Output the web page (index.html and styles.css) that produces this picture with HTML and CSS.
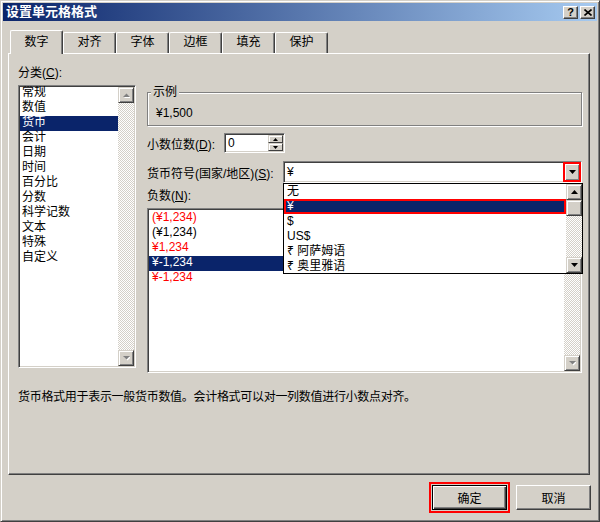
FILE: index.html
```html
<!DOCTYPE html>
<html lang="zh-CN">
<head>
    <meta charset="UTF-8">
    <title>设置单元格格式</title>
    <link rel="stylesheet" href="styles.css">
</head>
<body>
<div class="window">
    <div class="titlebar">
        <span class="title">设置单元格格式</span>
        <div class="caption-buttons">
            <div class="caption-btn help">?</div>
            <div class="caption-btn close">
                <svg width="8" height="7" viewBox="0 0 8 7"><path d="M0.5 0.5 L7.5 6.5 M7.5 0.5 L0.5 6.5" stroke="#000" stroke-width="1.6"/></svg>
            </div>
        </div>
    </div>

    <div class="tabs">
        <div class="tab active">数字</div>
        <div class="tab">对齐</div>
        <div class="tab">字体</div>
        <div class="tab">边框</div>
        <div class="tab">填充</div>
        <div class="tab">保护</div>
    </div>

    <div class="panel">
        <div class="panel-body">
            <div class="category">
                <div class="label">分类(<u>C</u>):</div>
                <div class="listbox category-list">
                    <ul class="items">
                        <li>常规</li>
                        <li>数值</li>
                        <li class="selected">货币</li>
                        <li>会计</li>
                        <li>日期</li>
                        <li>时间</li>
                        <li>百分比</li>
                        <li>分数</li>
                        <li>科学记数</li>
                        <li>文本</li>
                        <li>特殊</li>
                        <li>自定义</li>
                    </ul>
                    <div class="scrollbar">
                        <div class="sb-btn"><svg width="7" height="5" viewBox="0 0 7 5"><polygon points="1,5 8,5 4.5,1.5" fill="#fff"/><polygon points="0,4 7,4 3.5,0.5" fill="#808080"/></svg></div>
                        <div class="sb-track"></div>
                        <div class="sb-btn"><svg width="7" height="5" viewBox="0 0 7 5"><polygon points="1,1 8,1 4.5,4.5" fill="#fff"/><polygon points="0,0 7,0 3.5,3.5" fill="#808080"/></svg></div>
                    </div>
                </div>
            </div>

            <div class="options">
                <fieldset class="sample">
                    <legend>示例</legend>
                    <div class="sample-value">¥1,500</div>
                </fieldset>

                <div class="field-row decimals-row">
                    <span class="field-label decimals-label">小数位数(<u>D</u>):</span>
                    <div class="spin">
                        <span class="spin-value">0</span>
                        <div class="spin-buttons">
                            <div class="spin-btn"><svg width="5" height="3" viewBox="0 0 5 3"><polygon points="0,3 5,3 2.5,0" fill="#000"/></svg></div>
                            <div class="spin-btn"><svg width="5" height="3" viewBox="0 0 5 3"><polygon points="0,0 5,0 2.5,3" fill="#000"/></svg></div>
                        </div>
                    </div>
                </div>

                <div class="field-row symbol-row">
                    <span class="field-label symbol-label">货币符号(国家/地区)(<u>S</u>):</span>
                    <div class="combo">
                        <span class="combo-value">¥</span>
                        <div class="combo-btn marked"><svg width="7" height="4" viewBox="0 0 7 4"><polygon points="0,0 7,0 3.5,4" fill="#000"/></svg></div>
                        <div class="dropdown">
                            <ul class="items">
                                <li>无</li>
                                <li class="selected marked-row">¥</li>
                                <li>$</li>
                                <li>US$</li>
                                <li>₹ 阿萨姆语</li>
                                <li>₹ 奥里雅语</li>
                            </ul>
                            <div class="scrollbar">
                                <div class="sb-btn"><svg width="7" height="4" viewBox="0 0 7 4"><polygon points="0,4 7,4 3.5,0" fill="#000"/></svg></div>
                                <div class="sb-btn thumb"></div>
                                <div class="sb-track"></div>
                                <div class="sb-btn"><svg width="7" height="4" viewBox="0 0 7 4"><polygon points="0,0 7,0 3.5,4" fill="#000"/></svg></div>
                            </div>
                        </div>
                    </div>
                </div>

                <div class="label negative-label">负数(<u>N</u>):</div>
                <div class="listbox negative-list">
                    <ul class="items">
                        <li class="red">(¥1,234)</li>
                        <li>(¥1,234)</li>
                        <li class="red">¥1,234</li>
                        <li class="selected">¥-1,234</li>
                        <li class="red">¥-1,234</li>
                    </ul>
                    <div class="scrollbar">
                        <div class="sb-btn"><svg width="7" height="5" viewBox="0 0 7 5"><polygon points="1,5 8,5 4.5,1.5" fill="#fff"/><polygon points="0,4 7,4 3.5,0.5" fill="#808080"/></svg></div>
                        <div class="sb-track"></div>
                        <div class="sb-btn"><svg width="7" height="5" viewBox="0 0 7 5"><polygon points="1,1 8,1 4.5,4.5" fill="#fff"/><polygon points="0,0 7,0 3.5,3.5" fill="#808080"/></svg></div>
                    </div>
                </div>
            </div>
        </div>

        <p class="description">货币格式用于表示一般货币数值。会计格式可以对一列数值进行小数点对齐。</p>
    </div>

    <div class="actions">
        <button class="btn default marked">确定</button>
        <button class="btn">取消</button>
    </div>
</div>
</body>
</html>
```

FILE: styles.css
```css
* {
    box-sizing: border-box;
}

body {
    margin: 0;
    background: #d4d0c8;
    font-family: "Liberation Sans", "Noto Sans CJK SC", "Noto Sans", "DejaVu Sans", sans-serif;
    font-size: 12px;
    color: #000;
}

ul {
    list-style: none;
    margin: 0;
    padding: 0;
}

.window {
    width: 600px;
    height: 522px;
    padding: 2px;
    background: #d4d0c8;
    border: 1px solid;
    border-color: #d4d0c8 #404040 #404040 #d4d0c8;
    box-shadow: inset 1px 1px #fff, inset -1px -1px #808080;
}

/* title bar */

.titlebar {
    display: flex;
    align-items: center;
    justify-content: space-between;
    height: 18px;
    padding: 0 2px 0 3px;
    background: linear-gradient(to right, #0a246a, #a6caf0);
}

.title {
    color: #fff;
    font-weight: bold;
    font-size: 13px;
    line-height: 18px;
}

.caption-buttons {
    display: flex;
    gap: 2px;
}

.caption-btn {
    display: flex;
    align-items: center;
    justify-content: center;
    width: 15px;
    height: 13px;
    background: #d4d0c8;
    border: 1px solid;
    border-color: #fff #404040 #404040 #fff;
    box-shadow: inset -1px -1px #808080;
    font-weight: bold;
    font-size: 11px;
    line-height: 11px;
}

/* tabs */

.tabs {
    display: flex;
    align-items: flex-end;
    height: 23px;
    margin-top: 9px;
    padding-left: 7px;
}

.tab {
    width: 53px;
    height: 21px;
    text-align: center;
    line-height: 19px;
    border-top: 1px solid #fff;
    border-left: 1px solid #fff;
    border-right: 1px solid #404040;
    border-radius: 2px 2px 0 0;
    box-shadow: inset -1px 0 #808080;
}

.tab.active {
    position: relative;
    z-index: 1;
    height: 24px;
    margin-bottom: -1px;
    line-height: 22px;
    background: #d4d0c8;
}

/* panel */

.panel {
    height: 422px;
    margin: 0 7px 0 5px;
    padding: 12px 7px 0 9px;
    border: 1px solid;
    border-color: #fff #404040 #404040 #fff;
    box-shadow: inset -1px -1px #808080;
}

.panel-body {
    display: flex;
    gap: 11px;
}

.label {
    height: 15px;
    line-height: 15px;
    margin-bottom: 4px;
}

.category {
    width: 118px;
}

.options {
    width: 435px;
    padding-top: 19px;
}

/* list boxes */

.listbox {
    display: flex;
    background: #fff;
    border: 1px solid;
    border-color: #808080 #fff #fff #808080;
    box-shadow: inset 1px 1px #404040, inset -1px -1px #d4d0c8;
    padding: 1px;
}

.listbox .items {
    flex: 1;
    overflow: hidden;
}

.listbox li {
    height: 15px;
    line-height: 13px;
    padding-left: 2px;
    white-space: nowrap;
}

.category-list {
    height: 283px;
}

.category-list .items {
    margin-top: -1px;
}

.negative-list {
    height: 165px;
}

.negative-list li {
    padding-left: 3px;
}

.negative-list .items {
    margin-top: 1px;
}

li.selected {
    background: #0a246a;
    color: #fff;
}

li.red {
    color: #f00;
}

/* scroll bars */

.scrollbar {
    display: flex;
    flex-direction: column;
    width: 16px;
}

.sb-btn {
    display: flex;
    align-items: center;
    justify-content: center;
    height: 16px;
    flex-shrink: 0;
    background: #d4d0c8;
    border: 1px solid;
    border-color: #d4d0c8 #404040 #404040 #d4d0c8;
    box-shadow: inset 1px 1px #fff, inset -1px -1px #808080;
}

.sb-track {
    flex: 1;
    background: repeating-conic-gradient(#d4d0c8 0% 25%, #fff 0% 50%) 0 0 / 2px 2px;
}

/* sample group */

.sample {
    margin: 0;
    padding: 6px 8px 4px;
    min-inline-size: 0;
    border: 1px solid #808080;
    box-shadow: inset 1px 1px #fff, 1px 1px #fff;
}

.sample legend {
    margin-left: -5px;
    padding: 0 2px;
    line-height: 15px;
    background: #d4d0c8;
}

.sample-value {
    line-height: 15px;
}

/* fields */

.field-row {
    display: flex;
    align-items: center;
}

.decimals-row {
    margin-top: 7px;
}

.symbol-row {
    margin-top: 8px;
}

.decimals-label {
    width: 77px;
}

.symbol-label {
    width: 136px;
}

.spin,
.combo {
    display: flex;
    align-items: center;
    background: #fff;
    border: 1px solid;
    border-color: #808080 #fff #fff #808080;
    box-shadow: inset 1px 1px #404040, inset -1px -1px #d4d0c8;
    padding: 1px;
}

.spin {
    width: 61px;
    height: 20px;
}

.spin-value {
    flex: 1;
    padding-left: 2px;
}

.spin-buttons {
    display: flex;
    flex-direction: column;
    width: 15px;
}

.spin-btn {
    display: flex;
    align-items: center;
    justify-content: center;
    height: 8px;
    background: #d4d0c8;
    border: 1px solid;
    border-color: #d4d0c8 #404040 #404040 #d4d0c8;
    box-shadow: inset 1px 1px #fff;
}

.combo {
    position: relative;
    width: 299px;
    height: 22px;
}

.combo-value {
    flex: 1;
    padding-left: 2px;
}

.combo-btn {
    display: flex;
    align-items: center;
    justify-content: center;
    width: 16px;
    height: 18px;
    background: #d4d0c8;
    border: 1px solid;
    border-color: #d4d0c8 #404040 #404040 #d4d0c8;
    box-shadow: inset 1px 1px #fff, inset -1px -1px #808080;
}

.marked {
    outline: 2px solid #f00;
    outline-offset: -1px;
}

.dropdown {
    position: absolute;
    z-index: 2;
    top: calc(100% + 1px);
    left: -1px;
    display: flex;
    width: 300px;
    height: 91px;
    background: #fff;
    border: 1px solid #000;
}

.dropdown .items {
    flex: 1;
}

.dropdown li {
    height: 15px;
    line-height: 15px;
    padding-left: 3px;
    white-space: nowrap;
}

.dropdown .thumb {
    height: 16px;
}

li.marked-row {
    box-shadow: inset 0 0 0 2px #f00;
}

.negative-label {
    margin-top: 6px;
}

.description {
    margin: 17px 0 0;
    line-height: 15px;
    letter-spacing: -0.3px;
}

/* dialog buttons */

.actions {
    display: flex;
    justify-content: flex-end;
    gap: 9px;
    margin-top: 10px;
    padding-right: 6px;
}

.btn {
    width: 75px;
    height: 25px;
    padding: 0;
    font: inherit;
    color: #000;
    background: #d4d0c8;
    border: 1px solid;
    border-color: #fff #404040 #404040 #fff;
    box-shadow: inset -1px -1px #808080;
}

.btn.default {
    border-color: #000;
    box-shadow: inset 1px 1px #fff, inset -1px -1px #404040, inset -2px -2px #808080;
}

.btn.marked {
    outline-offset: 1px;
}
```
